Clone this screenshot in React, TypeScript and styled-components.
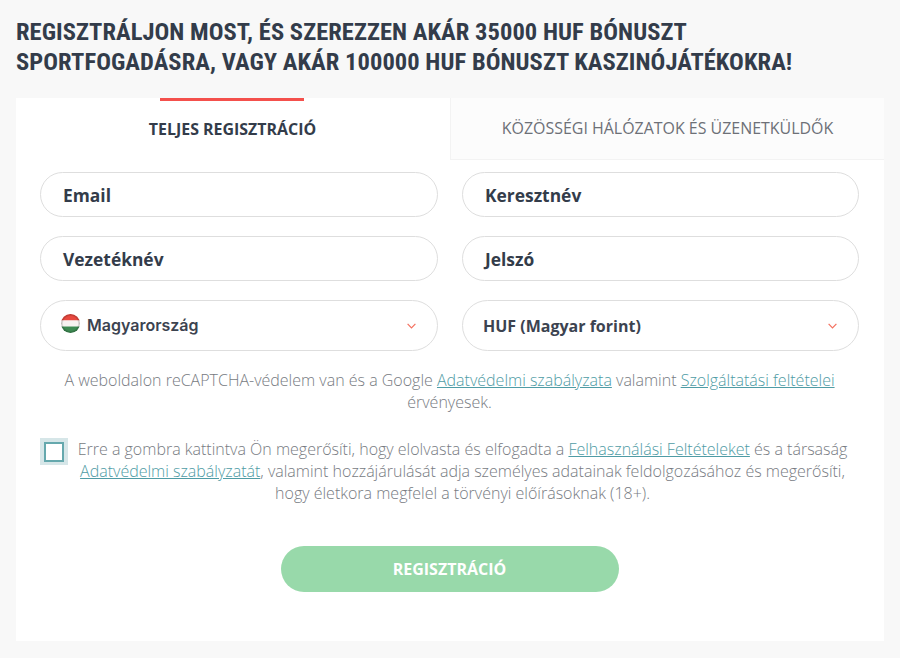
import React from "react";
import styled, { createGlobalStyle } from "styled-components";

const Global = createGlobalStyle`
  html, body { margin: 0; padding: 0; background: #f8f8f8; }
  * { box-sizing: border-box; }
`;

const Page = styled.div`
  width: 900px;
  height: 658px;
  padding: 17px 16px 17px;
  display: flex;
  flex-direction: column;
  font-family: "Open Sans", sans-serif;
`;

const Title = styled.h1`
  margin: 0 0 21px;
  font: 700 24.5px/30px Roboto, sans-serif;
  font-stretch: 75%;
  color: #333c4a;
  text-transform: uppercase;
  white-space: nowrap;
  letter-spacing: 0.05px;
`;

const Card = styled.div`
  flex: 1;
  background: #fff;
  display: flex;
  flex-direction: column;
`;

const Tabs = styled.div`
  display: flex;
  height: 62px;
`;

const Tab = styled.div<{ $active?: boolean }>`
  position: relative;
  flex: none;
  width: 434px;
  display: flex;
  align-items: center;
  justify-content: center;
  font-size: 15.95px;
  padding-bottom: 1px;
  padding-right: ${(p) => (p.$active ? "1px" : "0")};
  text-transform: uppercase;
  font-weight: ${(p) => (p.$active ? 700 : 400)};
  color: ${(p) => (p.$active ? "#333c4a" : "#6d7077")};
  background: ${(p) => (p.$active ? "#fff" : "#fcfcfc")};
  border-left: ${(p) => (p.$active ? "none" : "1px solid #f3f3f3")};
  border-bottom: ${(p) => (p.$active ? "none" : "1px solid #f3f3f3")};
`;

const TabMark = styled.span`
  position: absolute;
  top: 0;
  left: 144px;
  width: 144px;
  height: 3px;
  background: #f4504c;
`;

const Form = styled.div`
  padding: 12px 25px 0 24px;
  display: flex;
  flex-direction: column;
`;

const Grid = styled.div`
  display: grid;
  grid-template-columns: 398px 397px;
  column-gap: 24px;
  row-gap: 19px;
  grid-template-rows: 45px 45px 51px;
`;

const Field = styled.div`
  border: 1px solid #dedede;
  border-radius: 26px;
  background: #fff;
  display: flex;
  align-items: center;
  padding-left: 22px;
  font-size: 17.4px;
  font-weight: 700;
  color: #333c4a;
`;

const Select = styled.div`
  border: 1px solid #dedede;
  border-radius: 26px;
  background: #fff;
  display: flex;
  align-items: center;
  padding-left: 20px;
  padding-right: 21px;
  gap: 7px;
  color: #3c4350;
`;

const CountryLabel = styled.span`
  flex: 1;
  margin-top: -2px;
  font: 600 16px Inter, sans-serif;
`;

const CurrencyLabel = styled.span`
  flex: 1;
  font: 700 16px "Open Sans", sans-serif;
`;

const Notice = styled.p`
  margin: 18px 0 0;
  text-align: center;
  font-size: 16px;
  font-weight: 300;
  line-height: 22px;
  color: #777b82;
`;

const Link = styled.a`
  color: #4f9ca5;
  text-decoration: underline;
`;

const Consent = styled.div`
  margin-top: 25px;
  display: flex;
  align-items: flex-start;
`;

const CheckWrap = styled.div`
  flex: none;
  width: 28px;
  height: 27px;
  background: #d6e6e8;
  display: flex;
  align-items: center;
  justify-content: center;
`;

const CheckBox = styled.div`
  width: 20px;
  height: 20px;
  background: #fff;
  border: 2px solid #65a8ad;
`;

const ConsentText = styled.p`
  margin: 0;
  flex: 1;
  padding-right: 2px;
  text-align: center;
  font-size: 16px;
  font-weight: 300;
  line-height: 22px;
  color: #777b82;
`;

const Submit = styled.button`
  align-self: center;
  margin-top: 42px;
  width: 338px;
  height: 46px;
  border: none;
  border-radius: 23px;
  background: #98d9aa;
  color: #fff;
  font: 700 16px "Open Sans", sans-serif;
  text-transform: uppercase;
`;

const FlagIcon = styled.svg`
  margin-top: -4px;
`;

const Flag = () => (
  <FlagIcon width="19" height="19" viewBox="0 0 19 19">
    <defs>
      <clipPath id="flagClip">
        <circle cx="9.5" cy="9.5" r="9.5" />
      </clipPath>
      <radialGradient id="flagShade" cx="50%" cy="50%" r="50%">
        <stop offset="75%" stopColor="#000" stopOpacity="0" />
        <stop offset="100%" stopColor="#000" stopOpacity="0.28" />
      </radialGradient>
    </defs>
    <g clipPath="url(#flagClip)">
      <rect width="19" height="6.5" fill="#e8483f" />
      <rect y="6.5" width="19" height="6" fill="#f6f2f0" />
      <rect y="12.5" width="19" height="6.5" fill="#3d8a52" />
      <circle cx="9.5" cy="9.5" r="9.5" fill="url(#flagShade)" />
    </g>
  </FlagIcon>
);

const Chevron = () => (
  <svg width="9" height="6" viewBox="0 0 9 6" fill="none">
    <path d="M.6.8 4.5 4.9 8.4.8" stroke="#f4705f" strokeWidth="1.2" />
  </svg>
);

export default function App() {
  return (
    <Page>
      <Global />
      <Title>
        Regisztráljon most, és szerezzen akár 35000 HUF bónuszt
        <br />
        sportfogadásra, vagy akár 100000 HUF bónuszt kaszinójátékokra!
      </Title>
      <Card>
        <Tabs>
          <Tab $active>
            <TabMark />
            Teljes regisztráció
          </Tab>
          <Tab>Közösségi hálózatok és üzenetküldők</Tab>
        </Tabs>
        <Form>
          <Grid>
            <Field>Email</Field>
            <Field>Keresztnév</Field>
            <Field>Vezetéknév</Field>
            <Field>Jelszó</Field>
            <Select>
              <Flag />
              <CountryLabel>Magyarország</CountryLabel>
              <Chevron />
            </Select>
            <Select>
              <CurrencyLabel>HUF (Magyar forint)</CurrencyLabel>
              <Chevron />
            </Select>
          </Grid>
          <Notice>
            A weboldalon reCAPTCHA-védelem van és a Google <Link>Adatvédelmi szabályzata</Link> valamint{" "}
            <Link>Szolgáltatási feltételei</Link>
            <br />
            érvényesek.
          </Notice>
          <Consent>
            <CheckWrap>
              <CheckBox />
            </CheckWrap>
            <ConsentText>
              Erre a gombra kattintva Ön megerősíti, hogy elolvasta és elfogadta a{" "}
              <Link>Felhasználási Feltételeket</Link> és a társaság
              <br />
              <Link>Adatvédelmi szabályzatát</Link>, valamint hozzájárulását adja személyes adatainak feldolgozásához és megerősíti,
              <br />
              hogy életkora megfelel a törvényi előírásoknak (18+).
            </ConsentText>
          </Consent>
          <Submit>Regisztráció</Submit>
        </Form>
      </Card>
    </Page>
  );
}
